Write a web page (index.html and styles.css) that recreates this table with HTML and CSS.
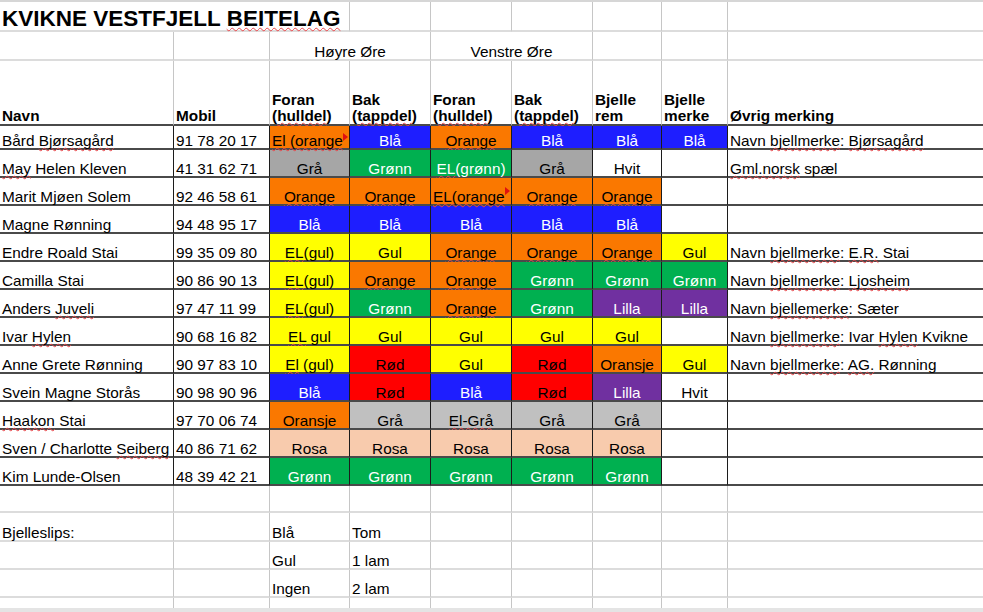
FILE: index.html
```html
<!DOCTYPE html>
<html lang="no">
<head>
<meta charset="utf-8">
<title>Kvikne Vestfjell Beitelag</title>
<link rel="stylesheet" href="styles.css">
</head>
<body>
<div class="sheet">
  <div class="row r-title">
    <div class="span3 ttl"><span>KVIKNE VESTFJELL <span class="sp">BEITELAG</span></span></div>
    <div></div><div></div><div></div><div></div><div></div><div></div>
  </div>
  <div class="row r-group">
    <div></div><div></div>
    <div class="span2 m">Høyre Øre</div>
    <div class="span2 m">Venstre Øre</div>
    <div></div><div></div><div></div>
  </div>
  <div class="row r-head">
    <div>Navn</div>
    <div>Mobil</div>
    <div><span>Foran<br>(<span class="sp">hulldel</span>)</span></div>
    <div><span>Bak<br>(<span class="sp">tappdel</span>)</span></div>
    <div><span>Foran<br>(<span class="sp">hulldel</span>)</span></div>
    <div><span>Bak<br>(<span class="sp">tappdel</span>)</span></div>
    <div><span>Bjelle<br>rem</span></div>
    <div><span>Bjelle<br>merke</span></div>
    <div>Øvrig merking</div>
  </div>

  <div class="row r-data r-first">
    <div><span>Bård <span class="sp">Bjørsagård</span></span></div>
    <div>91 78 20 17</div>
    <div class="o clip"><span class="sp">El (orange</span><i class="tri tri-a"></i></div>
    <div class="b">Blå</div>
    <div class="o"><span class="sp">Orange</span></div>
    <div class="b">Blå</div>
    <div class="b">Blå</div>
    <div class="b">Blå</div>
    <div><span>Navn <span class="sp">bjellmerke</span>: <span class="sp">Bjørsagård</span></span></div>
  </div>
  <div class="row r-data">
    <div><span><span class="sp">May</span> Helen Kleven</span></div>
    <div>41 31 62 71</div>
    <div class="dg">Grå</div>
    <div class="g">Grønn</div>
    <div class="g"><span><span class="sp">EL</span>(grønn)</span></div>
    <div class="dg">Grå</div>
    <div class="w">Hvit</div>
    <div></div>
    <div><span><span class="sp">Gml.norsk</span> spæl</span></div>
  </div>
  <div class="row r-data">
    <div>Marit Mjøen Solem</div>
    <div>92 46 58 61</div>
    <div class="o"><span class="sp">Orange</span></div>
    <div class="o"><span class="sp">Orange</span></div>
    <div class="o clip"><span class="sp">EL(orange</span><i class="tri"></i></div>
    <div class="o"><span class="sp">Orange</span></div>
    <div class="o"><span class="sp">Orange</span></div>
    <div></div>
    <div></div>
  </div>
  <div class="row r-data">
    <div>Magne Rønning</div>
    <div>94 48 95 17</div>
    <div class="b">Blå</div>
    <div class="b">Blå</div>
    <div class="b">Blå</div>
    <div class="b">Blå</div>
    <div class="b">Blå</div>
    <div></div>
    <div></div>
  </div>
  <div class="row r-data">
    <div>Endre Roald Stai</div>
    <div>99 35 09 80</div>
    <div class="y"><span><span class="sp">EL</span>(gul)</span></div>
    <div class="y">Gul</div>
    <div class="o"><span class="sp">Orange</span></div>
    <div class="o"><span class="sp">Orange</span></div>
    <div class="o"><span class="sp">Orange</span></div>
    <div class="y">Gul</div>
    <div><span>Navn <span class="sp">bjellmerke</span>: <span class="sp">E.R.</span> Stai</span></div>
  </div>
  <div class="row r-data">
    <div>Camilla Stai</div>
    <div>90 86 90 13</div>
    <div class="y"><span><span class="sp">EL</span>(gul)</span></div>
    <div class="o"><span class="sp">Orange</span></div>
    <div class="o"><span class="sp">Orange</span></div>
    <div class="g">Grønn</div>
    <div class="g">Grønn</div>
    <div class="g">Grønn</div>
    <div><span>Navn <span class="sp">bjellmerke</span>: <span class="sp">Ljosheim</span></span></div>
  </div>
  <div class="row r-data">
    <div><span>Anders <span class="sp">Juveli</span></span></div>
    <div>97 47 11 99</div>
    <div class="y"><span><span class="sp">EL</span>(gul)</span></div>
    <div class="g">Grønn</div>
    <div class="o"><span class="sp">Orange</span></div>
    <div class="g">Grønn</div>
    <div class="p">Lilla</div>
    <div class="p">Lilla</div>
    <div><span>Navn <span class="sp">bjellemerke</span>: Sæter</span></div>
  </div>
  <div class="row r-data">
    <div><span>Ivar <span class="sp">Hylen</span></span></div>
    <div>90 68 16 82</div>
    <div class="y"><span><span class="sp">EL</span> gul</span></div>
    <div class="y">Gul</div>
    <div class="y">Gul</div>
    <div class="y">Gul</div>
    <div class="y">Gul</div>
    <div></div>
    <div><span>Navn <span class="sp">bjellmerke</span>: Ivar <span class="sp">Hylen</span> Kvikne</span></div>
  </div>
  <div class="row r-data">
    <div>Anne Grete Rønning</div>
    <div>90 97 83 10</div>
    <div class="y"><span><span class="sp">El</span> (gul)</span></div>
    <div class="r">Rød</div>
    <div class="y">Gul</div>
    <div class="r">Rød</div>
    <div class="o">Oransje</div>
    <div class="y">Gul</div>
    <div><span>Navn <span class="sp">bjellmerke</span>: <span class="sp">AG.</span> Rønning</span></div>
  </div>
  <div class="row r-data">
    <div>Svein Magne Storås</div>
    <div>90 98 90 96</div>
    <div class="b">Blå</div>
    <div class="r">Rød</div>
    <div class="b">Blå</div>
    <div class="r">Rød</div>
    <div class="p">Lilla</div>
    <div class="w">Hvit</div>
    <div></div>
  </div>
  <div class="row r-data">
    <div><span><span class="sp">Haakon</span> Stai</span></div>
    <div>97 70 06 74</div>
    <div class="o">Oransje</div>
    <div class="lg">Grå</div>
    <div class="lg"><span class="sp">El-Grå</span></div>
    <div class="lg">Grå</div>
    <div class="lg">Grå</div>
    <div></div>
    <div></div>
  </div>
  <div class="row r-data">
    <div><span>Sven / Charlotte <span class="sp">Seiberg</span></span></div>
    <div>40 86 71 62</div>
    <div class="pk">Rosa</div>
    <div class="pk">Rosa</div>
    <div class="pk">Rosa</div>
    <div class="pk">Rosa</div>
    <div class="pk">Rosa</div>
    <div></div>
    <div></div>
  </div>
  <div class="row r-data">
    <div>Kim Lunde-Olsen</div>
    <div>48 39 42 21</div>
    <div class="g">Grønn</div>
    <div class="g">Grønn</div>
    <div class="g">Grønn</div>
    <div class="g">Grønn</div>
    <div class="g">Grønn</div>
    <div></div>
    <div></div>
  </div>

  <div class="row r-blank">
    <div></div><div></div><div></div><div></div><div></div><div></div><div></div><div></div><div></div>
  </div>
  <div class="row r-slip r-slip1">
    <div>Bjelleslips:</div><div></div><div>Blå</div><div>Tom</div><div></div><div></div><div></div><div></div><div></div>
  </div>
  <div class="row r-slip">
    <div></div><div></div><div>Gul</div><div>1 lam</div><div></div><div></div><div></div><div></div><div></div>
  </div>
  <div class="row r-slip">
    <div></div><div></div><div>Ingen</div><div>2 lam</div><div></div><div></div><div></div><div></div><div></div>
  </div>
  <div class="row r-end">
    <div></div><div></div><div></div><div></div><div></div><div></div><div></div><div></div><div></div>
  </div>
  <div class="band"></div>
</div>
</body>
</html>
```

FILE: styles.css
```css
* {
  box-sizing: border-box;
}

html,
body {
  margin: 0;
  padding: 0;
  background: #ffffff;
}

body {
  font-family: "Liberation Sans", Arial, sans-serif;
  font-size: 15.35px;
  color: #000000;
}

.sheet {
  width: 983px;
  border-top: 2px solid #d6d6d6;
}

.row {
  display: grid;
  grid-template-columns: 174px 96px 80px 81px 81px 81px 69px 66px 1fr;
}

.row > div {
  display: flex;
  align-items: flex-end;
  min-width: 0;
  padding: 0 2px;
  border-right: 1px solid #c6c6c6;
  border-bottom: 2px solid #dcdcdc;
  white-space: nowrap;
  line-height: 14px;
}

.row > div:last-child {
  border-right: 0;
}

.span2 {
  grid-column: span 2;
}

.span3 {
  grid-column: span 3;
}

.m {
  justify-content: center;
}

/* row heights */
.r-title {
  height: 30px;
}

.r-title .ttl {
  font-size: 22.5px;
  font-weight: bold;
  line-height: 22px;
  padding-left: 2px;
}

.r-group {
  height: 29px;
}

.r-head {
  height: 65px;
  font-weight: bold;
}

.r-head > div {
  border-bottom-color: #4a4a4a;
  line-height: 16px;
}

.r-data {
  height: 28px;
}

.r-first {
  height: 24px;
}

.r-data > div {
  border-bottom-color: #4a4a4a;
  border-right-color: #1c1c1c;
}

.r-blank {
  height: 27px;
}

.r-slip {
  height: 28px;
}

.r-slip1 {
  height: 29px;
}

.r-end {
  height: 10px;
}

.r-end > div {
  border-bottom: 0;
}

.band {
  height: 4px;
  background: #e4e4e4;
}

/* cell fills */
.o,
.b,
.g,
.dg,
.lg,
.y,
.r,
.p,
.pk,
.w {
  justify-content: center;
}

.o {
  background: #fa7800;
}

.b {
  background: #1e1eff;
  color: #ffffff;
}

.g {
  background: #00b050;
  color: #ffffff;
}

.dg {
  background: #a6a6a6;
}

.lg {
  background: #c0c0c0;
}

.y {
  background: #ffff00;
}

.r {
  background: #ff0000;
}

.p {
  background: #7030a0;
  color: #ffffff;
}

.pk {
  background: #f8cbad;
}

.w {
  background: #ffffff;
}

/* overflowing cells with comment marker */
.row > div.clip {
  justify-content: flex-start;
  position: relative;
}

.tri {
  position: absolute;
  right: 1px;
  top: 9px;
  width: 0;
  height: 0;
  border-left: 5px solid #e01010;
  border-top: 4px solid transparent;
  border-bottom: 4px solid transparent;
}

.tri-a {
  top: 7px;
}

/* spell-check squiggle */
.sp {
  text-decoration-line: underline;
  text-decoration-style: wavy;
  text-decoration-color: #e8464a;
  text-decoration-thickness: 1px;
  text-underline-offset: 1px;
  text-decoration-skip-ink: none;
}
```
